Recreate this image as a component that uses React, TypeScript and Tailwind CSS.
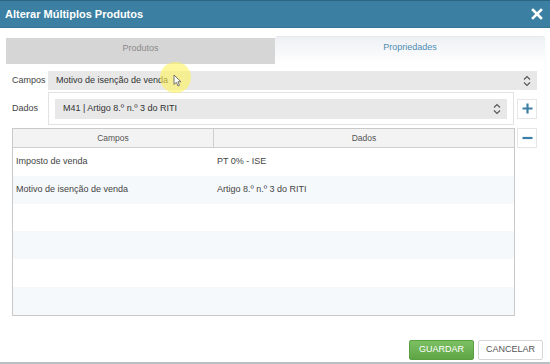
export default function App() {
  const rows = [
    { campo: "Imposto de venda", dado: "PT 0% - ISE" },
    { campo: "Motivo de isenção de venda", dado: "Artigo 8.º n.º 3 do RITI" },
    { campo: "", dado: "" },
    { campo: "", dado: "" },
    { campo: "", dado: "" },
    { campo: "", dado: "" },
  ];

  const Chevrons = () => (
    <svg width="8" height="12" viewBox="0 0 8 12" fill="none" stroke="#555" strokeWidth="1.1">
      <path d="M1 4.5 L4 1.5 L7 4.5" />
      <path d="M1 7.5 L4 10.5 L7 7.5" />
    </svg>
  );

  return (
    <div
      className="relative w-[550px] h-[364px] overflow-hidden bg-white flex flex-col"
      style={{ fontFamily: '"Liberation Sans", Arial, sans-serif' }}
    >
      {/* Cabeçalho */}
      <div className="h-[28px] shrink-0 bg-[#3b80a2] border-t border-[#2d6581] border-b border-b-[#357593] flex items-center justify-between pl-[5px] pr-[7px]">
        <span className="text-[11px] font-bold text-white">Alterar Múltiplos Produtos</span>
        <svg width="12" height="12" viewBox="0 0 12 12" stroke="white" strokeWidth="2.6" strokeLinecap="square">
          <path d="M2 2 L10 10 M10 2 L2 10" />
        </svg>
      </div>

      {/* Separadores */}
      <div className="flex items-start mt-[8px] ml-[6px] mr-[5px]">
        <div className="w-[269px] h-[26px] mt-[2px] pb-[4px] bg-[#d6d6d6] flex items-center justify-center text-[9px] text-[#8a8a8a]">
          Produtos
        </div>
        <div className="flex-1 h-[28px] rounded-t-[3px] border-t border-[#e6e8ec] bg-gradient-to-b from-[#eef0f4] to-white flex justify-center pt-[4px] text-[9px] text-[#4f8db3]">
          Propriedades
        </div>
      </div>

      {/* Campos */}
      <div className="flex items-center mt-[7px] pl-[12px] pr-[13px]">
        <span className="w-[36px] text-[9px] text-[#444]">Campos</span>
        <div className="flex-1 h-[19px] bg-[#e8e8e8] flex items-center justify-between pl-[8px] pr-[6px] text-[9px] text-[#333]">
          <span>Motivo de isenção de venda</span>
          <Chevrons />
        </div>
      </div>

      {/* Dados */}
      <div className="flex items-center mt-[2px] pl-[12px] pr-[13px]">
        <span className="w-[36px] text-[9px] text-[#444]">Dados</span>
        <div className="w-[466px] h-[33px] border border-[#e2e2e2] pl-[6px] pr-[6px] flex items-center">
          <div className="flex-1 h-[20px] bg-[#e8e8e8] flex items-center justify-between pl-[8px] pr-[6px] text-[9px] text-[#333]">
            <span>M41 | Artigo 8.º n.º 3 do RITI</span>
            <Chevrons />
          </div>
        </div>
        <div className="ml-auto w-[20px] h-[20px] border border-[#e6e6e6] flex items-center justify-center">
          <svg width="11" height="11" viewBox="0 0 11 11" stroke="#3c7fa6" strokeWidth="2.2">
            <path d="M5.5 0.5 V10.5 M0.5 5.5 H10.5" />
          </svg>
        </div>
      </div>

      {/* Tabela */}
      <div className="flex items-start mt-[3px] pl-[12px] pr-[13px]">
        <div className="w-[503px] border border-[#c9c9c9]">
          <div className="grid grid-cols-[201px_1fr] h-[19px] bg-[#f3f3f3] border-b border-[#cfcfcf] text-[8.5px] text-[#555]">
            <div className="flex items-center justify-center border-r border-[#cfcfcf]">Campos</div>
            <div className="flex items-center justify-center">Dados</div>
          </div>
          {rows.map((r, i) => (
            <div
              key={i}
              className={`grid grid-cols-[201px_1fr] h-[27.8px] items-center text-[9px] text-[#444] ${
                i % 2 === 1 ? "bg-[#f6f9fb]" : "bg-white"
              }`}
            >
              <div className="pl-[3px]">{r.campo}</div>
              <div className="pl-[3px]">{r.dado}</div>
            </div>
          ))}
        </div>
        <div className="ml-auto w-[20px] h-[20px] border border-[#e6e6e6] flex items-center justify-center">
          <svg width="11" height="4" viewBox="0 0 11 4" stroke="#3c7fa6" strokeWidth="2.2">
            <path d="M0.5 2 H10.5" />
          </svg>
        </div>
      </div>

      {/* Botões */}
      <div className="flex justify-end gap-[4px] mt-auto mb-[2px] pr-[7px]">
        <button className="w-[65px] h-[20px] rounded-[2px] bg-gradient-to-b from-[#7cc063] to-[#5ea545] border border-[#58a040] text-[9px] text-white">
          GUARDAR
        </button>
        <button className="w-[65px] h-[20px] rounded-[2px] bg-white border border-[#d6d6d6] text-[9px] text-[#555]">
          CANCELAR
        </button>
      </div>
      <div className="h-[2px] bg-[#b9c1c5]" />

      {/* Realce do cursor */}
      <div className="absolute left-[160px] top-[62px] w-[31px] h-[31px] rounded-full bg-[#fff25a]/60 pointer-events-none" />
      <svg className="absolute left-[173px] top-[74px]" width="9" height="13" viewBox="0 0 9 13">
        <path d="M1 1 V10.5 L3.3 8.3 L5 12 L6.5 11.3 L4.9 7.8 L8 7.8 Z" fill="white" stroke="#666" strokeWidth="0.9" />
      </svg>
    </div>
  );
}
